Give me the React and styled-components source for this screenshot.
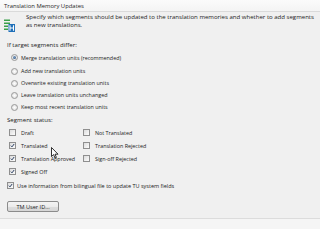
import React from 'react'
import styled, { createGlobalStyle } from 'styled-components'

const GlobalStyle = createGlobalStyle`
  html, body {
    margin: 0;
    padding: 0;
    background: #f0f0f0;
  }
  body {
    font-family: "Open Sans", "Liberation Sans", sans-serif;
    color: #1e1e1e;
  }
`

const Page = styled.div`
  position: relative;
  width: 320px;
  height: 229px;
  overflow: hidden;
  background: #f0f0f0;
  display: flex;
  flex-direction: column;
`

const Header = styled.div`
  height: 11px;
  padding-left: 4px;
  display: flex;
  align-items: center;
  background: linear-gradient(#fbfbfb, #f4f4f4);
  border-bottom: 1px solid #dadada;
  font-size: 5.9px;
  color: #1f1f1f;
`

const Intro = styled.div`
  display: flex;
  align-items: flex-start;
  padding: 2px 0 0 4px;
  gap: 11px;
  height: 24px;
`

const IntroText = styled.div`
  font-size: 6.05px;
  line-height: 7.5px;
  color: #222;
  white-space: nowrap;
`

const IconWrap = styled.div`
  margin-top: 5px;
  line-height: 0;
  & svg {
    display: block;
  }
`

const Body = styled.div`
  padding-left: 7px;
  display: flex;
  flex-direction: column;
`

const GroupLabel = styled.div`
  height: ${(p) => p.h}px;
  display: flex;
  align-items: center;
  font-size: 6.1px;
  color: #222;
`

const OptionRow = styled.label`
  display: flex;
  align-items: center;
  gap: ${(p) => p.gap || 5}px;
  height: ${(p) => p.h || 12}px;
  padding-left: ${(p) => p.indent || 0}px;
  font-size: ${(p) => p.size || 5.5}px;
  color: #222;
  white-space: nowrap;
`

const Radio = styled.span`
  width: 5px;
  height: 5px;
  border-radius: 50%;
  border: 1px solid #9a9a9a;
  background: radial-gradient(circle, #ffffff, #d8d8d8);
  display: flex;
  align-items: center;
  justify-content: center;
  flex-shrink: 0;
  &::after {
    content: '';
    display: ${(p) => (p.checked ? 'block' : 'none')};
    width: 3px;
    height: 3px;
    border-radius: 50%;
    background: radial-gradient(circle at 40% 40%, #7a9ec4, #2a4e7a);
  }
`

const Box = styled.span`
  width: 5px;
  height: 5px;
  border: 1px solid #8f8f8f;
  background: linear-gradient(135deg, #dcdcdc, #fcfcfc);
  display: flex;
  align-items: center;
  justify-content: center;
  flex-shrink: 0;
`

const StatusGrid = styled.div`
  display: grid;
  grid-template-columns: 74px 1fr;
  padding-left: 2px;
`

const Button = styled.button`
  margin: 8px 0 0 0;
  width: 52px;
  height: 11px;
  padding: 0;
  font-family: inherit;
  font-size: 5.6px;
  color: #222;
  border: 1px solid #8c8c8c;
  border-radius: 2px;
  background: linear-gradient(#f4f4f4 0%, #ececec 50%, #dedede 51%, #d6d6d6 100%);
  text-align: center;
`

const Footer = styled.div`
  margin-top: 6px;
  flex: 1;
  border-top: 1px solid #dcdcdc;
  background: #f5f5f5;
`

const Cursor = styled.svg`
  position: absolute;
  left: 51px;
  top: 147px;
`

function Check({ checked }) {
  return (
    <Box>
      {checked && (
        <svg width="5" height="5" viewBox="0 0 6 6">
          <path d="M1 3.2 L2.4 4.6 L5 1.2" fill="none" stroke="#2b3f63" strokeWidth="1.2" />
        </svg>
      )}
    </Box>
  )
}

function TmIcon() {
  return (
    <svg width="11" height="13" viewBox="0 0 11 13">
      <rect x="0" y="0.5" width="6" height="1.5" fill="#3aa04a" />
      <rect x="0" y="3.5" width="6" height="1.5" fill="#3aa04a" />
      <rect x="0" y="6.5" width="4" height="1.5" fill="#3aa04a" />
      <rect x="0" y="9.5" width="4" height="1.5" fill="#3aa04a" />
      <rect x="4.5" y="5" width="6.5" height="8" fill="#1f6fb8" />
      <path d="M6 6.3 V11.8 M9.5 6.3 V11.8 M6 9 H9.5" stroke="#ffffff" strokeWidth="1.1" />
    </svg>
  )
}

const radios = [
  ['Merge translation units (recommended)', true],
  ['Add new translation units', false],
  ['Overwrite existing translation units', false],
  ['Leave translation units unchanged', false],
  ['Keep most recent translation units', false],
]

const statuses = [
  ['Draft', false],
  ['Not Translated', false],
  ['Translated', true],
  ['Translation Rejected', false],
  ['Translation Approved', true],
  ['Sign-off Rejected', false],
  ['Signed Off', true],
]

export default function App() {
  return (
    <Page>
      <GlobalStyle />
      <Header>Translation Memory Updates</Header>
      <Intro>
        <IconWrap>
          <TmIcon />
        </IconWrap>
        <IntroText>
          Specify which segments should be updated to the translation memories and whether to add segments
          <br />
          as new translations.
        </IntroText>
      </Intro>
      <Body>
        <GroupLabel h={12}>If target segments differ:</GroupLabel>
        {radios.map(([label, checked], i) => (
          <OptionRow key={label} indent={4} gap={3} size={5.4} h={i === 0 ? 15 : 12}>
            <Radio checked={checked} />
            {label}
          </OptionRow>
        ))}
        <GroupLabel h={13}>Segment status:</GroupLabel>
        <StatusGrid>
          {statuses.map(([label, checked]) => (
            <OptionRow key={label} h={13} gap={5} size={5.4}>
              <Check checked={checked} />
              {label}
            </OptionRow>
          ))}
        </StatusGrid>
        <OptionRow h={15} gap={3}>
          <Check checked />
          Use information from bilingual file to update TU system fields
        </OptionRow>
        <Button>TM User ID...</Button>
      </Body>
      <Footer />
      <Cursor width="8" height="12" viewBox="0 0 8 12">
        <path d="M0.5 0.5 L0.5 9.5 L2.6 7.6 L4 11 L5.4 10.4 L4 7.2 L7 7.2 Z" fill="#ffffff" stroke="#000" strokeWidth="0.8" />
      </Cursor>
    </Page>
  )
}
